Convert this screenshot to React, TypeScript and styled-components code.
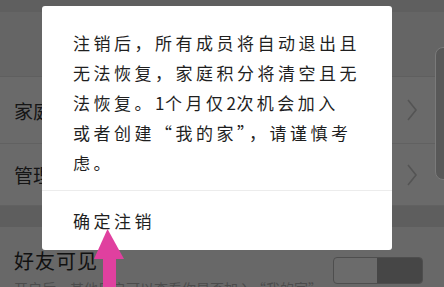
import React from "react";
import styled, { createGlobalStyle } from "styled-components";

const Global = createGlobalStyle`
  html, body { margin: 0; padding: 0; background: #666; }
  body { font-family: "Noto Sans CJK SC", "Noto Sans", sans-serif; }
`;

const Page = styled.div`
  position: relative;
  width: 444px;
  height: 287px;
  overflow: hidden;
  display: flex;
  flex-direction: column;
  background: #686868;
  font-family: "Noto Sans CJK SC", "Noto Sans", sans-serif;
`;

const Band = styled.div<{ $h: number; $bg: string; $line?: string }>`
  height: ${(p) => p.$h}px;
  flex: none;
  background: ${(p) => p.$bg};
  border-bottom: ${(p) => (p.$line ? `1px solid ${p.$line}` : "none")};
`;

const Row = styled.div<{ $h: number }>`
  height: ${(p) => p.$h}px;
  flex: none;
  display: flex;
  align-items: center;
  justify-content: space-between;
  padding: 0 26px 0 14px;
  background: #6a6a6a;
  border-bottom: 1px solid #616161;
`;

const RowLabel = styled.span`
  font-size: 19px;
  color: #151515;
  line-height: 1;
`;

const Section = styled.div`
  flex: 1;
  display: flex;
  flex-direction: column;
  padding: 21px 21px 0 14px;
  background: #686868;
`;

const SectionHead = styled.div`
  display: flex;
  align-items: flex-start;
  justify-content: space-between;
`;

const SectionTitle = styled.span`
  font-size: 20px;
  letter-spacing: 1px;
  color: #111;
  line-height: 22px;
  margin-top: 2px;
`;

const SectionDesc = styled.div`
  font-size: 14px;
  color: #4c4c4c;
  margin-top: -4px;
  white-space: nowrap;
  line-height: 16px;
`;

const Toggle = styled.div`
  width: 90px;
  height: 27px;
  box-sizing: border-box;
  border: 1px solid #4e4e4e;
  border-radius: 4px;
  display: flex;
  overflow: hidden;
  margin-top: 9px;
  background: #6b6b6b;
`;

const Knob = styled.div`
  margin-left: auto;
  width: 45px;
  background: #464646;
`;

const EdgePanel = styled.div`
  position: absolute;
  left: 435px;
  top: 47px;
  width: 30px;
  height: 133px;
  box-sizing: border-box;
  border: 1px solid #7a7a7a;
  border-radius: 8px;
  background: #585858;
`;

const Modal = styled.div`
  position: absolute;
  left: 42px;
  top: 6px;
  width: 350px;
  height: 244px;
  background: #fff;
  border-radius: 3px;
  display: flex;
  flex-direction: column;
`;

const Message = styled.div`
  padding: 22px 0 12px 31px;
  font-size: 17px;
  letter-spacing: 3.5px;
  line-height: 30px;
  color: #1f1f1f;
  border-bottom: 1px solid #ececec;
  white-space: nowrap;
`;

const Line = styled.div``;

const Digit = styled.span`
  letter-spacing: 0.5px;
`;

const Action = styled.div`
  flex: 1;
  display: flex;
  align-items: center;
  padding-left: 31px;
  font-size: 17px;
  letter-spacing: 3.5px;
  color: #1f1f1f;
`;

const ArrowSvg = styled.svg`
  position: absolute;
  left: 90px;
  top: 226px;
`;

const Chevron = () => (
  <svg width="12" height="22" viewBox="0 0 12 22">
    <path d="M2 1 L10 11 L2 21" fill="none" stroke="#545454" strokeWidth="1.6" />
  </svg>
);

export default function App() {
  return (
    <>
      <Global />
      <Page lang="zh-CN">
        <Band $h={12} $bg="#5f5f5f" />
        <Band $h={64} $bg="#656565" $line="#5f5f5f" />
        <Row $h={66}>
          <RowLabel>家庭</RowLabel>
          <Chevron />
        </Row>
        <Row $h={61}>
          <RowLabel>管理</RowLabel>
          <Chevron />
        </Row>
        <Band $h={21} $bg="#5e5e5e" />
        <Section>
          <SectionHead>
            <SectionTitle>好友可见</SectionTitle>
            <Toggle>
              <Knob />
            </Toggle>
          </SectionHead>
          <SectionDesc>开启后，其他用户可以查看你是否加入“我的家”</SectionDesc>
        </Section>
        <EdgePanel />
        <Modal>
          <Message>
            <Line>注销后，所有成员将自动退出且</Line>
            <Line>无法恢复，家庭积分将清空且无</Line>
            <Line>
              法恢复。<Digit>1</Digit>个月仅<Digit>2</Digit>次机会加入
            </Line>
            <Line>或者创建“我的家”，请谨慎考</Line>
            <Line>虑。</Line>
          </Message>
          <Action>确定注销</Action>
        </Modal>
        <ArrowSvg width="40" height="61" viewBox="0 0 40 61">
          <polygon points="17.5,3 4,33 34,33" fill="#e0409f" />
          <rect x="13" y="32" width="13" height="30" fill="#e0409f" />
        </ArrowSvg>
      </Page>
    </>
  );
}
